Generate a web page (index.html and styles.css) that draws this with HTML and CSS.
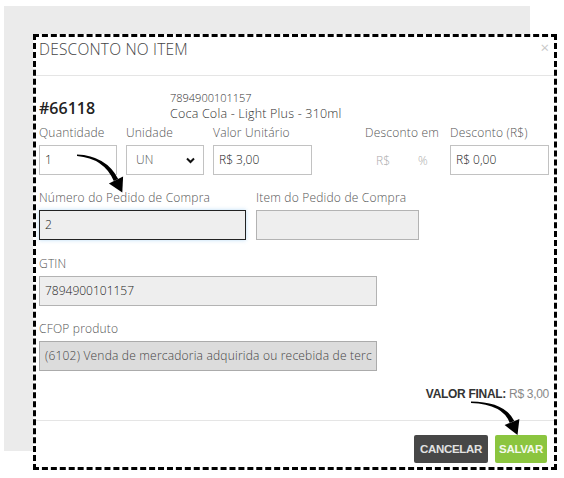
FILE: index.html
```html
<!DOCTYPE html>
<html lang="pt-BR">
<head>
  <meta charset="UTF-8" />
  <title>Desconto no item</title>
  <link rel="stylesheet" href="styles.css">
</head>
<body>

  <!-- fundo da tela -->
  <div class="backdrop"></div>

  <!-- Modal -->
  <div class="modal">
    <div class="modal-header">
      <h4>DESCONTO NO ITEM</h4>
      <span class="close">×</span>
    </div>

    <div class="modal-body">
      <div class="product">
        <div class="code">#66118</div>
        <div class="info">
          <div class="ean">7894900101157</div>
          <div class="name">Coca Cola - Light Plus - 310ml</div>
        </div>
      </div>

      <div class="row row-first">
        <div class="field f-qtd">
          <label>Quantidade</label>
          <div class="input">1</div>
        </div>
        <div class="field f-un">
          <label>Unidade</label>
          <div class="input select">
            <span>UN</span>
            <svg width="9" height="7" viewBox="0 0 9 7"><path d="M1 1.5 L4.5 5 L8 1.5" fill="none" stroke="#111" stroke-width="2"/></svg>
          </div>
        </div>
        <div class="field f-valor">
          <label>Valor Unitário</label>
          <div class="input">R$ 3,00</div>
        </div>
        <div class="field f-tipo">
          <label>Desconto em</label>
          <div class="toggle">
            <span>R$</span>
            <span>%</span>
          </div>
        </div>
        <div class="field f-desc">
          <label>Desconto (R$)</label>
          <div class="input">R$ 0,00</div>
        </div>
      </div>

      <div class="row row-2">
        <div class="field f-pedido">
          <label>Número do Pedido de Compra</label>
          <div class="input readonly focus">2</div>
        </div>
        <div class="field f-item">
          <label>Item do Pedido de Compra</label>
          <div class="input readonly"></div>
        </div>
      </div>

      <div class="row row-3">
        <div class="field f-wide">
          <label>GTIN</label>
          <div class="input readonly">7894900101157</div>
        </div>
      </div>

      <div class="row row-4">
        <div class="field f-wide">
          <label>CFOP produto</label>
          <div class="input disabled">(6102) Venda de mercadoria adquirida ou recebida de terc</div>
        </div>
      </div>

      <div class="total"><b>VALOR FINAL:</b> R$ 3,00</div>
    </div>

    <div class="modal-footer">
      <button class="btn btn-cancel">CANCELAR</button>
      <button class="btn btn-save">SALVAR</button>
    </div>
  </div>

  <!-- setas de anotação -->
  <svg class="arrows" width="564" height="478" viewBox="0 0 564 478">
    <path d="M77 154.6 Q105.8 155.7 118.2 178.9 L113.8 181.1 Q104.2 158.3 77 156 Z" fill="#000"/>
    <polygon points="108.9,183.6 123.1,176.4 122.3,192.5" fill="#000"/>
    <path d="M471 401.4 Q504.7 401.6 514.3 421 L509.7 423 Q503.3 404.4 471 403 Z" fill="#000"/>
    <polygon points="504.6,425.1 519.4,418.9 517.5,434.9" fill="#000"/>
  </svg>

</body>
</html>
```

FILE: styles.css
```css
* {
  box-sizing: border-box;
  margin: 0;
  padding: 0;
}

body {
  background: #ffffff;
  font-family: 'Open Sans', 'Liberation Sans', sans-serif;
  color: #333;
  width: 564px;
  height: 478px;
  overflow: hidden;
}

.backdrop {
  width: 526px;
  height: 445px;
  margin: 6px 0 0 4px;
  background: #ebebeb;
}

.modal {
  position: absolute;
  left: 33px;
  top: 34px;
  width: 524px;
  height: 436px;
  background: #ffffff;
  border: 3px dashed #000;
  display: flex;
  flex-direction: column;
}

.modal-header {
  display: flex;
  justify-content: space-between;
  align-items: flex-start;
  height: 39px;
  padding: 3px 5px 0 3px;
  border-bottom: 1px solid #e5e5e5;
}

.modal-header h4 {
  font-size: 15.5px;
  font-weight: 300;
  line-height: 18px;
  letter-spacing: 0.2px;
  color: #444;
}

.close {
  font-size: 15px;
  line-height: 14px;
  color: #c8c8c8;
}

.modal-body {
  padding: 14px 5px 18px 3px;
  border-bottom: 1px solid #e5e5e5;
}

.product {
  display: flex;
}

.code {
  width: 131px;
  margin-top: 8px;
  font-size: 16px;
  font-weight: 600;
  line-height: 20px;
  color: #222;
}

.ean {
  font-size: 11px;
  line-height: 16px;
  font-weight: 300;
  color: #333;
}

.name {
  font-size: 12.5px;
  line-height: 16px;
  font-weight: 300;
  letter-spacing: 0.2px;
  color: #333;
}

.row {
  display: flex;
  gap: 9px;
}

.row-first { margin-top: 3px; }
.row-2 { margin-top: 15px; gap: 10px; }
.row-3 { margin-top: 16px; }
.row-4 { margin-top: 15px; }

label {
  display: block;
  font-size: 12px;
  font-weight: 300;
  line-height: 15px;
  letter-spacing: 0.2px;
  margin-bottom: 5px;
  color: #555;
  white-space: nowrap;
}

.input {
  height: 30px;
  padding: 0 5px;
  border: 1px solid #c2c2c2;
  font-size: 12px;
  font-weight: 300;
  line-height: 28px;
  color: #222;
  white-space: nowrap;
  overflow: hidden;
}

.select {
  display: flex;
  justify-content: space-between;
  align-items: center;
  padding: 0 8px 0 9px;
}

.select span {
  color: #555;
}

.toggle {
  display: flex;
  align-items: center;
  height: 30px;
  padding-left: 11px;
  gap: 28px;
  font-size: 12px;
  font-weight: 300;
  color: #aaa;
}

.readonly {
  background: #eeeeee;
  border-color: #b3b3b3;
}

.focus {
  border-color: #222;
  box-shadow: 0 0 4px rgba(102, 175, 233, 0.45);
}

.disabled {
  background: #dcdcdc;
  border-color: #ababab;
  color: #444;
  padding-right: 0;
  letter-spacing: 0.2px;
}

.f-qtd { width: 78px; }
.f-un { width: 78px; }
.f-valor { width: 99px; }
.f-tipo { width: 76px; margin-left: 44px; }
.f-desc { width: 99px; }
.f-pedido { width: 207px; }
.f-item { width: 163px; }
.f-wide { width: 338px; }

.total {
  margin-top: 16px;
  text-align: right;
  font-family: 'Liberation Sans', sans-serif;
  font-size: 12px;
  line-height: 15px;
  letter-spacing: -0.3px;
  color: #888;
}

.total b {
  color: #333;
}

.modal-footer {
  display: flex;
  justify-content: flex-end;
  gap: 7px;
  padding: 14px 7px 0 0;
}

.btn {
  height: 28px;
  border: none;
  border-radius: 2px;
  font-family: 'Liberation Sans', sans-serif;
  font-size: 11.5px;
  font-weight: 700;
  letter-spacing: -0.3px;
}

.btn-cancel {
  width: 74px;
  background: #474747;
  color: #e2e2e2;
}

.btn-save {
  width: 52px;
  background: #8bc53f;
  color: #f4f9ec;
}

.arrows {
  position: absolute;
  left: 0;
  top: 0;
  pointer-events: none;
}
```
